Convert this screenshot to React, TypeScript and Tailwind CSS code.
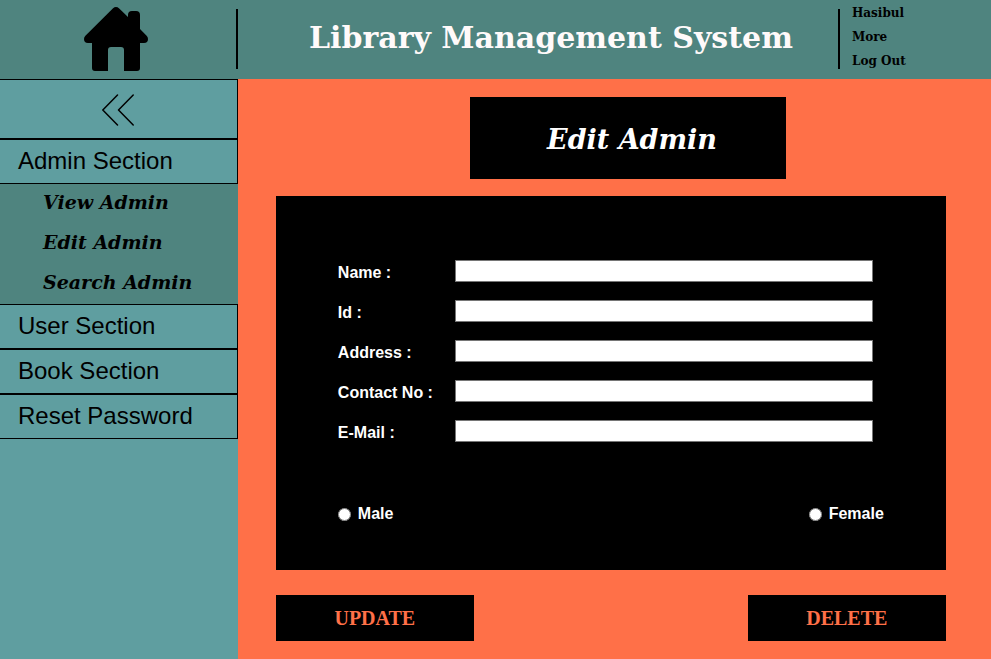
import React from "react";

const fields = [
  { id: "name", label: "Name :", type: "text" },
  { id: "member-id", label: "Id :", type: "text" },
  { id: "address", label: "Address :", type: "text" },
  { id: "contact", label: "Contact No :", type: "tel" },
  { id: "email", label: "E-Mail :", type: "email" },
];

const serif = "font-['DejaVu_Serif','Liberation_Serif',serif]";

function HomeIcon() {
  return (
    <svg width="64" height="64" viewBox="0 0 64 64" fill="black" aria-hidden="true">
      <path d="M28.8 1.4Q32 -1.4 35.2 1.4L44 10V8Q44 4 48 4H52Q56 4 56 8V22L62.6 28.8Q64 30.2 64 32Q64 36 60 36H56V61Q56 64 53 64H40V43Q40 40 37 40H27Q24 40 24 43V64H11Q8 64 8 61V36H4Q0 36 0 32Q0 30.2 1.4 28.8Z" />
    </svg>
  );
}

function CollapseIcon() {
  return (
    <svg width="32" height="32" viewBox="0 0 32 32" fill="none" stroke="black" strokeWidth="1.5" strokeLinecap="round" strokeLinejoin="round" aria-hidden="true">
      <path d="M15.5 1L.8 16L15.5 31M31.2 1L16.5 16L31.2 31" />
    </svg>
  );
}

function Section({ children }: { children: React.ReactNode }) {
  return (
    <a href="#" className="flex h-[45px] items-center border-y border-r border-black pb-[2px] pl-[18px] text-2xl text-black">
      {children}
    </a>
  );
}

function SubLink({ children }: { children: React.ReactNode }) {
  return (
    <a href="#" className={`${serif} flex h-10 items-start pt-1 pl-[43px] text-[19px] leading-7 font-bold text-black italic`}>
      {children}
    </a>
  );
}

export default function App() {
  return (
    <div className="flex min-h-screen flex-col bg-[#ff7048] font-['Liberation_Sans',Arial,sans-serif]">
      <header className="flex h-[79px] items-start bg-[#4f847f] pt-[9px]">
        <div className="flex h-[60px] w-[24%] items-center justify-center border-r-2 border-black pr-1">
          <a href="#" aria-label="Home" className="-my-2 block">
            <HomeIcon />
          </a>
        </div>
        <h1 className={`${serif} flex-1 pt-[11px] pl-[26px] text-center text-[30px] leading-9 font-bold whitespace-nowrap text-[#fffafa]`}>
          Library Management System
        </h1>
        <nav className={`${serif} flex h-[60px] w-[153px] flex-col justify-center border-l-2 border-black pb-1 pl-3 text-xs leading-6 font-bold`}>
          <a href="#">Hasibul</a>
          <a href="#">More</a>
          <a href="#">Log Out</a>
        </nav>
      </header>

      <div className="flex flex-1">
        <aside className="w-[24%] bg-[#5f9ea0]">
          <button type="button" aria-label="Collapse menu" className="flex h-[60px] w-full items-center justify-center border-y border-r border-black pt-[2px]">
            <CollapseIcon />
          </button>
          <nav>
            <Section>Admin Section</Section>
            <div className="bg-[#4f847f]">
              <SubLink>View Admin</SubLink>
              <SubLink>Edit Admin</SubLink>
              <SubLink>Search Admin</SubLink>
            </div>
            <Section>User Section</Section>
            <Section>Book Section</Section>
            <Section>Reset Password</Section>
          </nav>
        </aside>

        <main className="flex-1 pt-[18px] pb-[18px]">
          <h2 className={`${serif} ml-[232px] flex h-[82px] w-[42%] items-center justify-center bg-black pt-1 pl-2 text-[27px] font-bold whitespace-nowrap text-white italic`}>
            Edit Admin
          </h2>

          <form className="mt-[17px] mr-[6%] ml-[38px]" onSubmit={(e) => e.preventDefault()}>
            <div className="bg-black px-[62px] pt-16 pb-11 font-bold text-white">
              <div className="flex flex-col gap-[18px] pr-[11px]">
                {fields.map((f) => (
                  <div key={f.id} className="flex h-[22px] items-center">
                    <label htmlFor={f.id} className="w-[117px] shrink-0 pt-1">{f.label}</label>
                    <input id={f.id} name={f.id} type={f.type} className="h-[22px] min-w-0 flex-1 border border-[#767676] bg-white px-1 text-sm font-normal text-black" />
                  </div>
                ))}
              </div>
              <div className="mt-[60px] flex justify-between">
                <label className="flex items-center gap-[7px]">
                  <input type="radio" name="gender" value="male" className="size-[13px]" />
                  Male
                </label>
                <label className="flex items-center gap-[7px]">
                  <input type="radio" name="gender" value="female" className="size-[13px]" />
                  Female
                </label>
              </div>
            </div>
            <div className="mt-[25px] flex justify-between font-['Liberation_Serif',serif] text-xl font-bold text-[#ff7048]">
              <button type="submit" className="h-[46px] w-[198px] bg-black">UPDATE</button>
              <button type="button" className="h-[46px] w-[198px] bg-black">DELETE</button>
            </div>
          </form>
        </main>
      </div>
    </div>
  );
}
